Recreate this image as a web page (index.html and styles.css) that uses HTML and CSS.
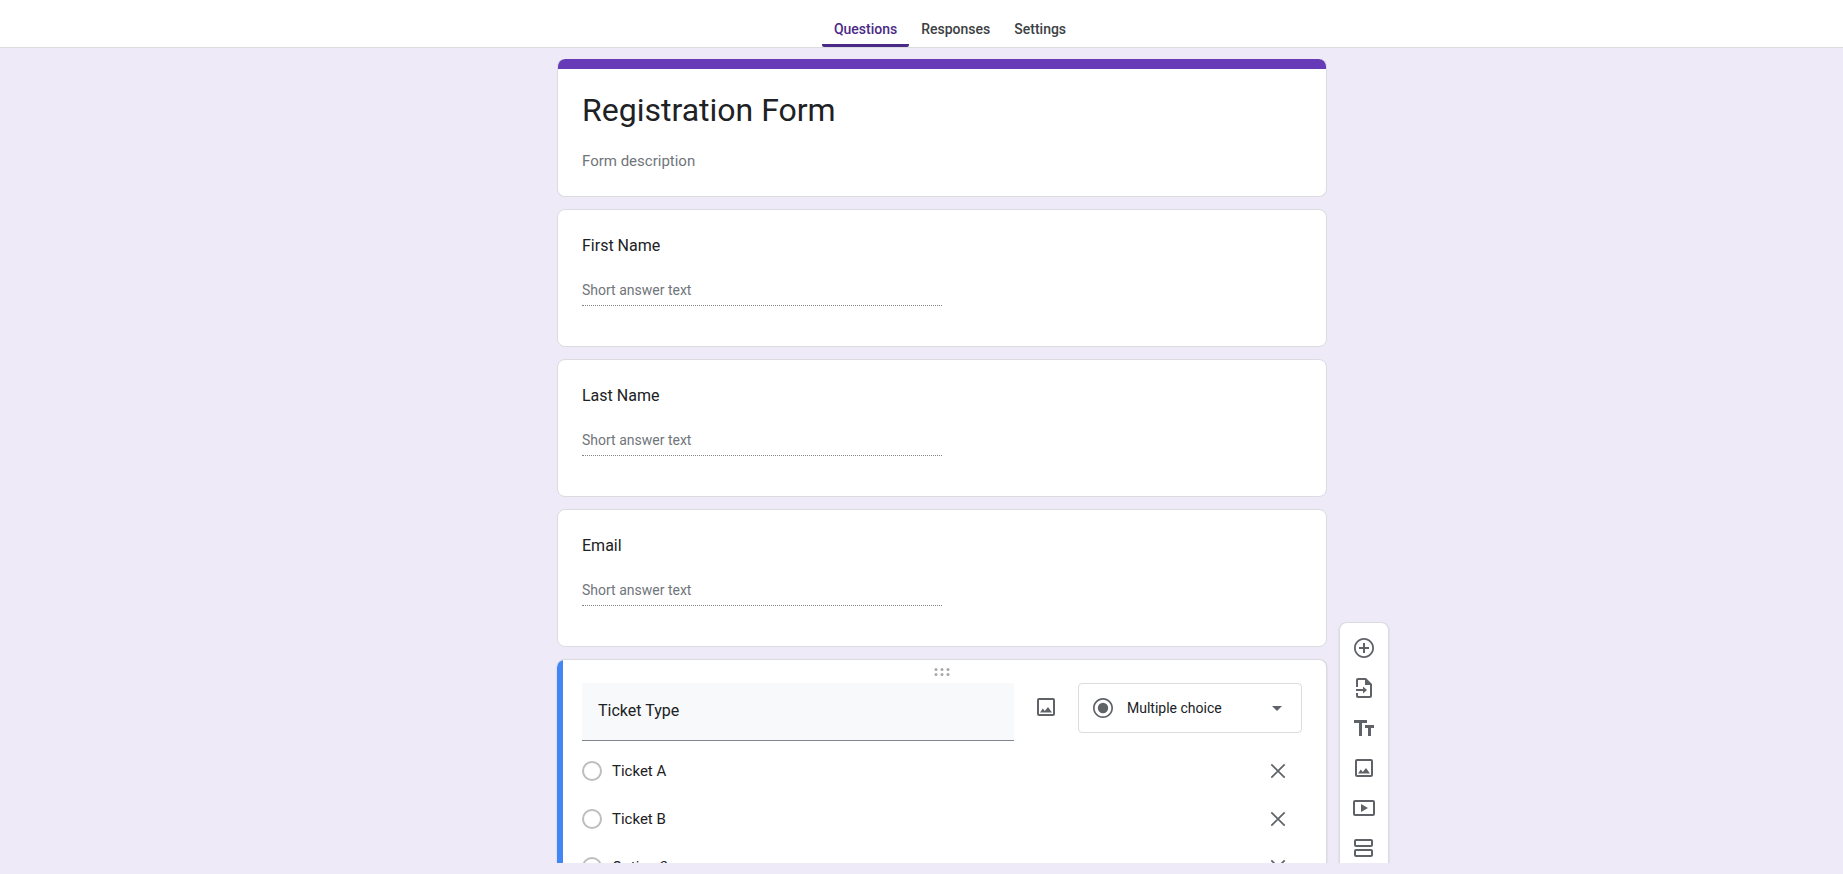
FILE: index.html
```
<!DOCTYPE html>
<html lang="en">
  <head>
    <meta charset="UTF-8" />
    <meta name="viewport" content="width=device-width, initial-scale=1.0" />
    <title>Registration Form</title>
    <link rel="stylesheet" href="styles.css">
  </head>
  <body>
    <header class="topbar">
      <nav class="tabs">
        <a href="#questions" class="tab active">Questions</a>
        <a href="#responses" class="tab">Responses</a>
        <a href="#settings" class="tab">Settings</a>
      </nav>
    </header>

    <main class="editor">
      <form class="cards">
        <section class="card title-card">
          <h1>Registration Form</h1>
          <input class="description" type="text" placeholder="Form description" aria-label="Form description" />
        </section>

        <section class="card">
          <label class="question" for="first-name">First Name</label>
          <input class="short-answer" type="text" id="first-name" placeholder="Short answer text" disabled />
        </section>

        <section class="card">
          <label class="question" for="last-name">Last Name</label>
          <input class="short-answer" type="text" id="last-name" placeholder="Short answer text" disabled />
        </section>

        <section class="card">
          <label class="question" for="email">Email</label>
          <input class="short-answer" type="text" id="email" placeholder="Short answer text" disabled />
        </section>

        <section class="card active-card">
          <button type="button" class="grip" aria-label="Move question">
            <svg width="16" height="8" viewBox="0 0 16 8" fill="#a8a8a8">
              <circle cx="2" cy="1.5" r="1.5" />
              <circle cx="8" cy="1.5" r="1.5" />
              <circle cx="14" cy="1.5" r="1.5" />
              <circle cx="2" cy="6.5" r="1.5" />
              <circle cx="8" cy="6.5" r="1.5" />
              <circle cx="14" cy="6.5" r="1.5" />
            </svg>
          </button>
          <div class="question-row">
            <input class="question-input" type="text" value="Ticket Type" aria-label="Question" />
            <button type="button" class="icon-button" aria-label="Add image">
              <svg class="icon" viewBox="0 0 24 24"><path d="M19 5v14H5V5h14m0-2H5c-1.100 0-2 .9-2 2v14c0 1.100.9 2 2 2h14c1.100 0 2-.9 2-2V5c0-1.100-.9-2-2-2z" /><path d="M6 17.500l2.800-4 2 2.500 3.200-4 4 5.500z" /></svg>
            </button>
            <div class="type-select">
              <svg class="icon" viewBox="0 0 24 24"><path d="M12 2C6.480 2 2 6.480 2 12s4.480 10 10 10 10-4.480 10-10S17.520 2 12 2zm0 18.300c-4.600 0-8.300-3.700-8.300-8.300S7.400 3.700 12 3.700s8.300 3.700 8.300 8.300-3.700 8.300-8.300 8.300z" /><circle cx="12" cy="12" r="5.200" /></svg>
              <select aria-label="Question type">
                <option>Multiple choice</option>
                <option>Checkboxes</option>
                <option>Dropdown</option>
              </select>
              <svg class="arrow" width="10" height="5" viewBox="0 0 10 5"><path d="M0 0h10L5 5z" /></svg>
            </div>
          </div>

          <div class="option">
            <input type="radio" name="ticket" aria-label="Ticket A" disabled />
            <input class="option-text" type="text" value="Ticket A" aria-label="Option 1 text" />
            <button type="button" class="icon-button" aria-label="Remove option 1">
              <svg class="icon" viewBox="0 0 24 24"><path d="M5.300 5.300l13.400 13.400M18.700 5.300L5.300 18.700" stroke="#5f6368" stroke-width="1.700" /></svg>
            </button>
          </div>
          <div class="option">
            <input type="radio" name="ticket" aria-label="Ticket B" disabled />
            <input class="option-text" type="text" value="Ticket B" aria-label="Option 2 text" />
            <button type="button" class="icon-button" aria-label="Remove option 2">
              <svg class="icon" viewBox="0 0 24 24"><path d="M5.300 5.300l13.400 13.400M18.700 5.300L5.300 18.700" stroke="#5f6368" stroke-width="1.700" /></svg>
            </button>
          </div>
          <div class="option">
            <input type="radio" name="ticket" aria-label="Option 3" disabled />
            <input class="option-text" type="text" value="Option 3" aria-label="Option 3 text" />
            <button type="button" class="icon-button" aria-label="Remove option 3">
              <svg class="icon" viewBox="0 0 24 24"><path d="M5.300 5.300l13.400 13.400M18.700 5.300L5.300 18.700" stroke="#5f6368" stroke-width="1.700" /></svg>
            </button>
          </div>
        </section>
      </form>

      <aside class="toolbar">
        <button type="button" class="icon-button" aria-label="Add question">
          <svg class="icon" viewBox="0 0 24 24"><path d="M12 2C6.480 2 2 6.480 2 12s4.480 10 10 10 10-4.480 10-10S17.520 2 12 2zm0 18.200c-4.500 0-8.200-3.700-8.200-8.200S7.500 3.800 12 3.800s8.200 3.700 8.200 8.200-3.700 8.200-8.200 8.200z" /><path d="M13 7h-2v4H7v2h4v4h2v-4h4v-2h-4z" /></svg>
        </button>
        <button type="button" class="icon-button" aria-label="Import questions">
          <svg class="icon" viewBox="0 0 24 24"><path d="M14 2H6c-1.100 0-2 .9-2 2v7h2V4h7v5h5v11H6v-3H4v3c0 1.100.9 2 2 2h12c1.100 0 2-.9 2-2V8z" /><path d="M4 13h7v-2.500l4 3.500-4 3.500V15H4z" /></svg>
        </button>
        <button type="button" class="icon-button" aria-label="Add title and description">
          <svg class="icon" viewBox="0 0 24 24"><path d="M2 4v3h5v13h3V7h5V4H2zm20 5h-9v3h3v8h3v-8h3V9z" /></svg>
        </button>
        <button type="button" class="icon-button" aria-label="Add image">
          <svg class="icon" viewBox="0 0 24 24"><path d="M19 5v14H5V5h14m0-2H5c-1.100 0-2 .9-2 2v14c0 1.100.9 2 2 2h14c1.100 0 2-.9 2-2V5c0-1.100-.9-2-2-2z" /><path d="M6 17.500l2.800-4 2 2.500 3.200-4 4 5.500z" /></svg>
        </button>
        <button type="button" class="icon-button" aria-label="Add video">
          <svg class="icon" viewBox="0 0 24 24"><path d="M21 4H3c-1.100 0-2 .9-2 2v12c0 1.100.9 2 2 2h18c1.100 0 2-.9 2-2V6c0-1.100-.9-2-2-2zm0 14H3V6h18z" /><path d="M9 8v8l7-4z" /></svg>
        </button>
        <button type="button" class="icon-button" aria-label="Add section">
          <svg class="icon" viewBox="0 0 24 24"><path d="M19 5v4H4V5h15m0-2H4c-1.100 0-2 .9-2 2v4c0 1.100.9 2 2 2h15c1.100 0 2-.9 2-2V5c0-1.100-.9-2-2-2zM19 15v4H4v-4h15m0-2H4c-1.100 0-2 .9-2 2v4c0 1.100.9 2 2 2h15c1.100 0 2-.9 2-2v-4c0-1.100-.9-2-2-2z" /></svg>
        </button>
      </aside>
    </main>
  </body>
</html>
```
FILE: styles.css
```
* {
  box-sizing: border-box;
}
body {
  margin: 0;
  height: 100vh;
  padding-bottom: 11px;
  display: flex;
  flex-direction: column;
  overflow: hidden;
  background-color: #eeeaf8;
  color: #202124;
  font-family: Roboto, Arial, sans-serif;
  font-size: 15px;
}
input,
select,
button {
  margin: 0;
  padding: 0;
  border: none;
  outline: none;
  border-radius: 0;
  background: transparent;
  color: inherit;
  font: inherit;
}
button {
  cursor: pointer;
}
.topbar {
  flex: none;
  display: flex;
  justify-content: center;
  padding-left: 57px;
  background-color: #ffffff;
  border-bottom: 1px solid #dadce0;
}
.tabs {
  display: flex;
}
.tab {
  height: 47px;
  padding: 20px 12px 0;
  line-height: 18px;
  font-size: 14px;
  font-weight: 500;
  color: #3c4043;
  text-decoration: none;
}
.tab.active {
  color: #4b2a87;
  background: linear-gradient(#4b2a87, #4b2a87) bottom / 100% 3px no-repeat;
  border-radius: 2px;
}
.editor {
  flex: 1;
  min-height: 0;
  display: grid;
  grid-template-columns: 1fr minmax(0, 770px) 1fr;
  align-items: start;
  column-gap: 12px;
  padding: 11px 0 0 41px;
  overflow: hidden;
}
.cards {
  grid-column: 2;
  display: flex;
  flex-direction: column;
  gap: 12px;
}
.card {
  display: flex;
  flex-direction: column;
  align-items: flex-start;
  padding: 24px 24px 40px;
  background-color: #ffffff;
  border: 1px solid #dadce0;
  border-radius: 8px;
}
.title-card {
  padding: 21px 24px 25px;
  border-top: none;
  background: linear-gradient(#673ab7, #673ab7) top / 100% 10px no-repeat border-box #ffffff;
}
h1 {
  margin: 10px 0 20px;
  font-size: 32px;
  font-weight: 400;
  line-height: 40px;
}
.description {
  width: 100%;
  height: 21px;
}
input::placeholder {
  color: #70757a;
  opacity: 1;
}
.question {
  font-size: 16px;
  line-height: 24px;
}
.short-answer {
  width: 50%;
  height: 27px;
  margin-top: 21px;
  padding-bottom: 4px;
  border-bottom: 1px dotted #80868b;
  font-size: 14px;
}
.active-card {
  padding: 0 24px 24px;
  background: linear-gradient(#4285f4, #4285f4) left / 6px 100% no-repeat border-box #ffffff;
  border-left: none;
  padding-left: 25px;
  box-shadow: 0 1px 2px rgba(60, 64, 67, 0.2);
}
.grip {
  display: flex;
  align-items: center;
  align-self: center;
  height: 23px;
}
.question-row {
  width: 100%;
  display: flex;
  align-items: flex-start;
}
.question-input {
  flex: 1;
  min-width: 0;
  height: 58px;
  padding: 0 16px 2px;
  background-color: #f8f9fa;
  border-bottom: 1px solid #80868b;
  font-size: 16px;
}
.icon-button {
  flex: none;
  width: 48px;
  height: 48px;
  display: flex;
  justify-content: center;
  align-items: center;
}
.question-row .icon-button {
  margin: 0 8px;
}
.icon {
  flex: none;
  width: 24px;
  height: 24px;
  fill: #5f6368;
}
.type-select {
  width: 224px;
  height: 50px;
  display: flex;
  align-items: center;
  gap: 12px;
  padding: 0 19px 0 12px;
  border: 1px solid #dadce0;
  border-radius: 4px;
}
.type-select select {
  flex: 1;
  min-width: 0;
  appearance: none;
  font-size: 14px;
}
.arrow {
  fill: #5f6368;
}
.option {
  width: 100%;
  height: 48px;
  display: flex;
  align-items: center;
}
.question-row + .option {
  margin-top: 6px;
}
.option input[type="radio"] {
  appearance: none;
  width: 20px;
  height: 20px;
  margin-right: 10px;
  border: 2px solid #bdbdbd;
  border-radius: 50%;
}
.option-text {
  flex: 1;
  min-width: 0;
}
.toolbar {
  width: 50px;
  margin-top: 563px;
  padding: 5px 4px;
  background-color: #ffffff;
  border: 1px solid #dadce0;
  border-radius: 8px;
  box-shadow: 0 1px 2px rgba(60, 64, 67, 0.2);
}
.toolbar .icon-button {
  width: 40px;
  height: 40px;
}
```
